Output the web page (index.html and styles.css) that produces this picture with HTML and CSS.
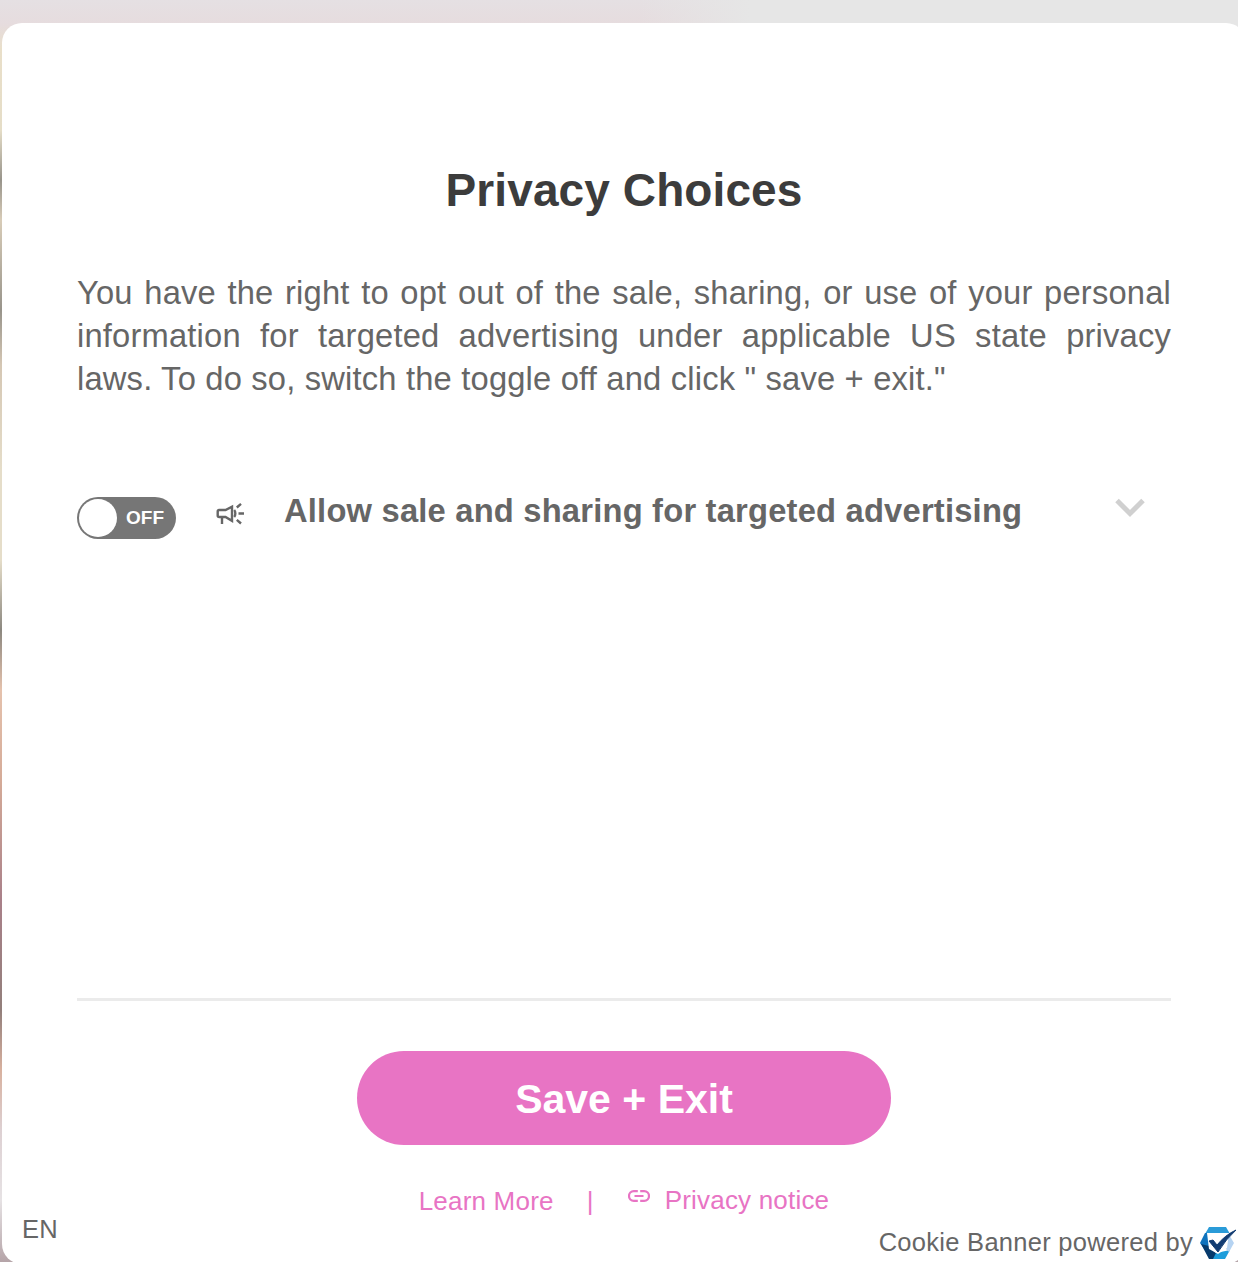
FILE: index.html
```
<!DOCTYPE html>
<html lang="en">
<head>
  <meta charset="UTF-8" />
  <meta name="viewport" content="width=device-width, initial-scale=1" />
  <title>Privacy Choices</title>
  <link rel="stylesheet" href="styles.css">
</head>
<body>
  <div class="banner">
    <main class="content">
      <h1>Privacy Choices</h1>
      <p class="description">You have the right to opt out of the sale, sharing, or use of your personal information for targeted advertising under applicable US state privacy laws. To do so, switch the toggle off and click " save + exit."</p>

      <div class="category">
        <button class="toggle" role="switch" aria-checked="false">
          <span class="knob"></span>
          <span class="toggle-label">OFF</span>
        </button>
        <svg class="megaphone" viewBox="0 0 28 24" fill="none" stroke="#666" stroke-width="2.4">
          <path d="M9.500 8H3.200q-1.500 0-1.500 1.500v4q0 1.500 1.500 1.500h6.300l6.500 3.800V4.700z" />
          <path d="M6 15v7" />
          <path d="M18.200 8c1.500 1.500 1.500 5.500 0 7" />
          <path d="M20.800 5.500l4.200-3.700M22.500 11.500h5.500M20.800 17.800l4.200 3.700" />
        </svg>
        <h2>Allow sale and sharing for targeted advertising</h2>
        <svg class="chevron" viewBox="0 0 30 20" fill="none" stroke="#d0d0d0" stroke-width="5">
          <path d="M2 2.500l13 13 13-13" />
        </svg>
      </div>
    </main>

    <div class="actions">
      <button class="save">Save + Exit</button>
      <div class="links">
        <a href="#">Learn More</a>
        <span class="separator">|</span>
        <a href="#" class="notice">
          <svg class="link-icon" viewBox="0 0 22 12" fill="none" stroke="#e874c4" stroke-width="2.2">
            <path d="M9.800 1.200H5.800a4.800 4.800 0 0 0 0 9.600h4M12.200 1.200h4a4.800 4.800 0 0 1 0 9.600h-4M6.500 6h9" />
          </svg>
          <span>Privacy notice</span>
        </a>
      </div>
    </div>

    <footer>
      <span class="language">EN</span>
      <span class="powered">
        Cookie Banner powered by
        <svg class="logo" viewBox="0 0 36 32">
          <path d="M9 0h17l4 7H5z" fill="#2a9bd8" />
          <path d="M5 6h4l2 16-6 1-5-7z" fill="#0f73bd" />
          <path d="M1 17l8 2 9 9-3 4H9z" fill="#073b6c" />
          <path d="M16 26l14-3-5 9H13z" fill="#1d9ddb" />
          <path d="M28 6l6 10-5 9-4-4z" fill="#b5d3f2" />
          <path d="M7 6h22l-2 15-9 6-9-5z" fill="#fff" />
          <path d="M9 14l4-1 4 5Q25 8 36 3 26 12 18 25z" fill="#123c72" stroke="#123c72" />
        </svg>
      </span>
    </footer>
  </div>
</body>
</html>
```

FILE: styles.css
```
* {
  box-sizing: border-box;
}

body {
  margin: 0;
  height: 1262px;
  padding: 23px 0 0 2px;
  overflow: hidden;
  font-family: Arial, "Liberation Sans", sans-serif;
  color: #666;
  background:
    linear-gradient(90deg, transparent 640px, #e6e6e6 750px) 0 0 / 100% 40px no-repeat,
    linear-gradient(180deg, #e5e0e3 0, #e6dcde 24px, #e9dfc9 50px, #e5ddc7 130px, #98948b 180px, #d8ccb8 220px, #98948b 310px, #d5c7b4 365px, #e5ddc9 470px, #e5ddc9 560px, #8c8880 630px, #e5c2ad 690px, #d5ab98 780px, #a98089 900px, #927f7b 1010px, #d8b19f 1070px, #ddd0d2 1130px, #e6e2e4 1200px, #b5a4a8 1262px);
}

.banner {
  display: flex;
  flex-direction: column;
  width: 1244px;
  height: 1241px;
  background: #fff;
  border-radius: 20px;
}

.content {
  height: 978px;
  margin: 0 75px;
  padding-top: 140px;
  border-bottom: 3px solid #ebebeb;
}

h1 {
  margin: 0;
  font-size: 46px;
  line-height: 54px;
  letter-spacing: 0.1px;
  text-align: center;
  color: #3c3c3c;
}

.description {
  margin: 54px 0 0;
  font-size: 32.7px;
  line-height: 43px;
  letter-spacing: 0.19px;
  text-align: justify;
}

.category {
  display: flex;
  align-items: flex-start;
  margin-top: 97px;
}

button {
  border: none;
  font-family: inherit;
  font-weight: bold;
  color: #fff;
  cursor: pointer;
}

.toggle {
  display: flex;
  align-items: center;
  width: 99px;
  height: 42px;
  padding: 0 2px;
  border-radius: 21px;
  background: #767676;
}

.knob {
  width: 38px;
  height: 38px;
  border-radius: 50%;
  background: #fff;
}

.toggle-label {
  margin-left: 9px;
  font-size: 19px;
}

.megaphone {
  width: 28px;
  height: 24px;
  margin: 5px 0 0 40px;
}

h2 {
  margin: -4px 0 0 40px;
  font-size: 32.7px;
  line-height: 36px;
  letter-spacing: 0.21px;
}

.chevron {
  width: 30px;
  height: 20px;
  margin: 1px 26px 0 auto;
}

.actions {
  display: flex;
  flex-direction: column;
  align-items: center;
  padding-top: 50px;
}

.save {
  width: 534px;
  height: 94px;
  padding-top: 3px;
  border-radius: 47px;
  background: #e874c4;
  font-size: 41px;
}

.links {
  display: flex;
  margin-top: 41px;
  font-size: 26px;
  line-height: 30px;
  letter-spacing: 0.2px;
  color: #e874c4;
}

.links a {
  color: inherit;
  text-decoration: none;
}

.separator {
  margin: 0 34px 0 33px;
}

.notice {
  display: flex;
  margin-top: -1px;
}

.link-icon {
  width: 22px;
  height: 12px;
  margin: 5px 15px 0 0;
}

footer {
  display: flex;
  justify-content: space-between;
  margin-top: -2px;
  padding: 0 10px 0 20px;
  font-size: 25.5px;
  line-height: 30px;
  letter-spacing: 0.28px;
}

.powered {
  display: flex;
  gap: 7px;
  margin-top: 13px;
}

.logo {
  width: 36px;
  height: 32px;
}
```
